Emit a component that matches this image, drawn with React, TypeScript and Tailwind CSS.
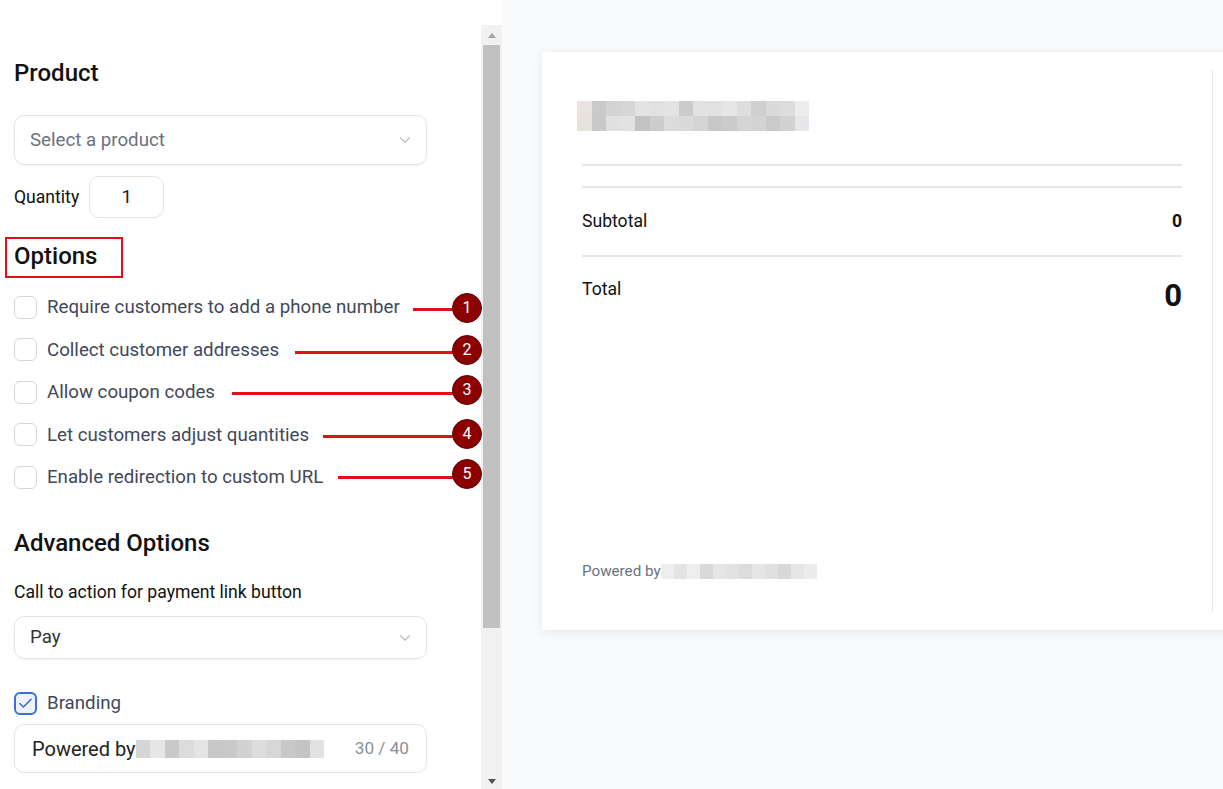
import { ChevronDown, Check } from 'lucide-react';

// pixelated placeholder blocks used where a brand name is masked
const Mosaic = ({ rows, cell }: { rows: string[][]; cell: string }) => (
  <div className="flex flex-col">
    {rows.map((row, i) => (
      <div key={i} className="flex">
        {row.map((c, j) => (
          <div key={j} className={cell} style={{ backgroundColor: c }} />
        ))}
      </div>
    ))}
  </div>
);

const headerMosaic = [
  ['#e9e2e0', '#cacaca', '#d3d3d3', '#d6d6d6', '#e3e3e3', '#e1e1e1', '#e3e3e3', '#cbcbcb', '#e2e2e2', '#e1e1e1', '#e6e6e6', '#dedede', '#cfcfcf', '#dadada', '#dcdcdc', '#ededed'],
  ['#e6e2dc', '#c9c9c9', '#e0e0e0', '#e2e2e2', '#c2c2c2', '#cdcdcd', '#dcdcdc', '#dadada', '#d7d5d3', '#c8c8c8', '#cbcbcb', '#d4d4d4', '#d3d3d3', '#cacaca', '#d2d2d2', '#e5e7ea'],
];

const footerMosaic = [
  ['#eeeeee', '#e4e4e4', '#eeeeee', '#d9d9d9', '#e6e6e6', '#e2e2e2', '#dcdcdc', '#e6e6e6', '#e0e0e0', '#d8d8d8', '#e6e6e6', '#ececec'],
];

const brandingMosaic = [
  ['#d6d6d6', '#e6e6e6', '#c9c9c9', '#dcdcdc', '#e4e4e4', '#c7c7c7', '#c9c9c9', '#d2d2d2', '#dddddd', '#d7d7d7', '#c8c8c8', '#c4c4c4', '#e2e2e2'],
];

const options = [
  'Require customers to add a phone number',
  'Collect customer addresses',
  'Allow coupon codes',
  'Let customers adjust quantities',
  'Enable redirection to custom URL',
];

// callout markers: line start x, line y, circle center y
const callouts = [
  { x1: 413, y: 309, cy: 308 },
  { x1: 295, y: 352, cy: 350 },
  { x1: 232, y: 393, cy: 390 },
  { x1: 323, y: 436, cy: 434 },
  { x1: 338, y: 477, cy: 474 },
];

export default function App() {
  return (
    <div
      className="flex h-[789px] w-[1223px] overflow-hidden bg-[#f9fafb]"
      style={{ fontFamily: 'Roboto, "Liberation Sans", sans-serif' }}
    >
      {/* Settings panel */}
      <div className="relative flex w-[502px] shrink-0 bg-white pt-[25px]">
        <div className="w-[481px] overflow-hidden pl-[14px] pr-[54px]">
          <h2 className="mt-[32px] text-[24px] font-medium leading-8 text-[#111]">Product</h2>

          <div className="mt-[26px] flex h-[50px] items-center justify-between rounded-[10px] border border-[#e2e4e8] pl-[15px] pr-[12px] shadow-[0_1px_2px_rgba(0,0,0,0.04)]">
            <span className="text-[18.7px] text-[#6b7280]">Select a product</span>
            <ChevronDown className="h-[18px] w-[18px] text-[#b8bcc2]" strokeWidth={1.5} />
          </div>

          <div className="mt-[11px] flex items-center gap-[10px]">
            <span className="text-[17.6px] text-[#111]">Quantity</span>
            <div className="flex h-[42px] w-[75px] items-center justify-center rounded-[10px] border border-[#e2e4e8] text-[18.7px] text-[#222]">
              1
            </div>
          </div>

          <div className="-ml-[9px] mt-[19px] flex h-[41px] w-[118px] items-center border-2 border-[#e0101a] pb-[3px] pl-[7px]">
            <h2 className="text-[24px] font-medium text-[#111]">Options</h2>
          </div>

          <div className="mt-[8px] flex flex-col">
            {options.map((label) => (
              <label key={label} className="flex h-[42.5px] items-center gap-[10px]">
                <span className="h-[23px] w-[23px] shrink-0 rounded-[6px] border border-[#d4d7dc] bg-white" />
                <span className="text-[18.7px] text-[#414859]">{label}</span>
              </label>
            ))}
          </div>

          <h2 className="mt-[28.5px] text-[24px] font-medium leading-8 text-[#111]">Advanced Options</h2>

          <p className="mt-[21px] text-[17.6px] leading-6 text-[#111]">Call to action for payment link button</p>

          <div className="mt-[12px] flex h-[43px] items-center justify-between rounded-[10px] border border-[#e2e4e8] pl-[15px] pr-[12px] shadow-[0_1px_2px_rgba(0,0,0,0.04)]">
            <span className="text-[18.7px] text-[#333]">Pay</span>
            <ChevronDown className="h-[18px] w-[18px] text-[#b8bcc2]" strokeWidth={1.5} />
          </div>

          <label className="mt-[32px] flex h-[24px] items-center gap-[10px]">
            <span className="flex h-[23px] w-[23px] items-center justify-center rounded-[6px] border-2 border-[#3b6fd8] bg-[#eef2fb]">
              <Check className="h-[17px] w-[17px] text-[#2f62cf]" strokeWidth={2} />
            </span>
            <span className="text-[18.7px] text-[#414859]">Branding</span>
          </label>

          <div className="mt-[9px] flex h-[49px] items-center rounded-[10px] border border-[#e2e4e8] pl-[17px] pr-[17px]">
            <span className="text-[20px] text-[#222]">Powered by</span>
            <Mosaic rows={brandingMosaic} cell="h-[18px] w-[14.5px]" />
            <span className="ml-auto text-[17.2px] text-[#8a8f98]">30 / 40</span>
          </div>
        </div>

        {/* scrollbar */}
        <div className="flex w-[21px] flex-col items-center bg-[#f1f1f1]">
          <div className="flex h-[20px] w-full items-center justify-center">
            <div className="h-0 w-0 border-x-[4px] border-b-[5px] border-x-transparent border-b-[#a3a3a3]" />
          </div>
          <div className="h-[583px] w-[17px] bg-[#c1c1c1]" />
          <div className="flex-1" />
          <div className="flex h-[16px] w-full items-center justify-center">
            <div className="h-0 w-0 border-x-[4px] border-t-[5px] border-x-transparent border-t-[#505050]" />
          </div>
        </div>

        {/* numbered callouts */}
        {callouts.map((c, i) => (
          <div key={i}>
            <div
              className="absolute h-[2.5px] bg-[#e30f17]"
              style={{ left: c.x1, top: c.y - 1, width: 454 - c.x1 }}
            />
            <div
              className="absolute flex h-[30px] w-[30px] items-center justify-center rounded-full border border-[#5e0000] bg-[#8c0000] text-[16px] text-white"
              style={{ left: 452, top: c.cy - 15 }}
            >
              {i + 1}
            </div>
          </div>
        ))}
      </div>

      {/* Preview */}
      <div className="flex-1 pl-[40px] pt-[52px]">
        <div className="h-[578px] w-[700px] bg-white py-[18px] shadow-[0_2px_10px_rgba(0,0,0,0.08)]">
          <div className="flex h-full w-[671px] flex-col border-r border-[#e5e7eb] pl-[40px] pr-[30px]">
            <div className="-ml-[5px] mt-[31px]">
              <Mosaic rows={headerMosaic} cell="h-[15px] w-[14.5px]" />
            </div>
            <div className="mt-[33px] h-[2px] bg-[#e6e7e9]" />
            <div className="mt-[20px] h-[2px] bg-[#e6e7e9]" />
            <div className="flex h-[67px] items-center justify-between">
              <span className="text-[17.6px] text-[#111]">Subtotal</span>
              <span className="text-[17.6px] font-bold text-[#111]">0</span>
            </div>
            <div className="h-[2px] bg-[#e6e7e9]" />
            <div className="mt-[20px] flex items-start justify-between">
              <span className="text-[17.6px] leading-6 text-[#111]">Total</span>
              <span className="mt-[1px] text-[31px] font-bold leading-9 text-[#111]">0</span>
            </div>
            <div className="mt-auto mb-[29px] flex items-center">
              <span className="text-[15.2px] text-[#6b7280]">Powered by</span>
              <Mosaic rows={footerMosaic} cell="h-[15px] w-[13px]" />
            </div>
          </div>
        </div>
      </div>
    </div>
  );
}
